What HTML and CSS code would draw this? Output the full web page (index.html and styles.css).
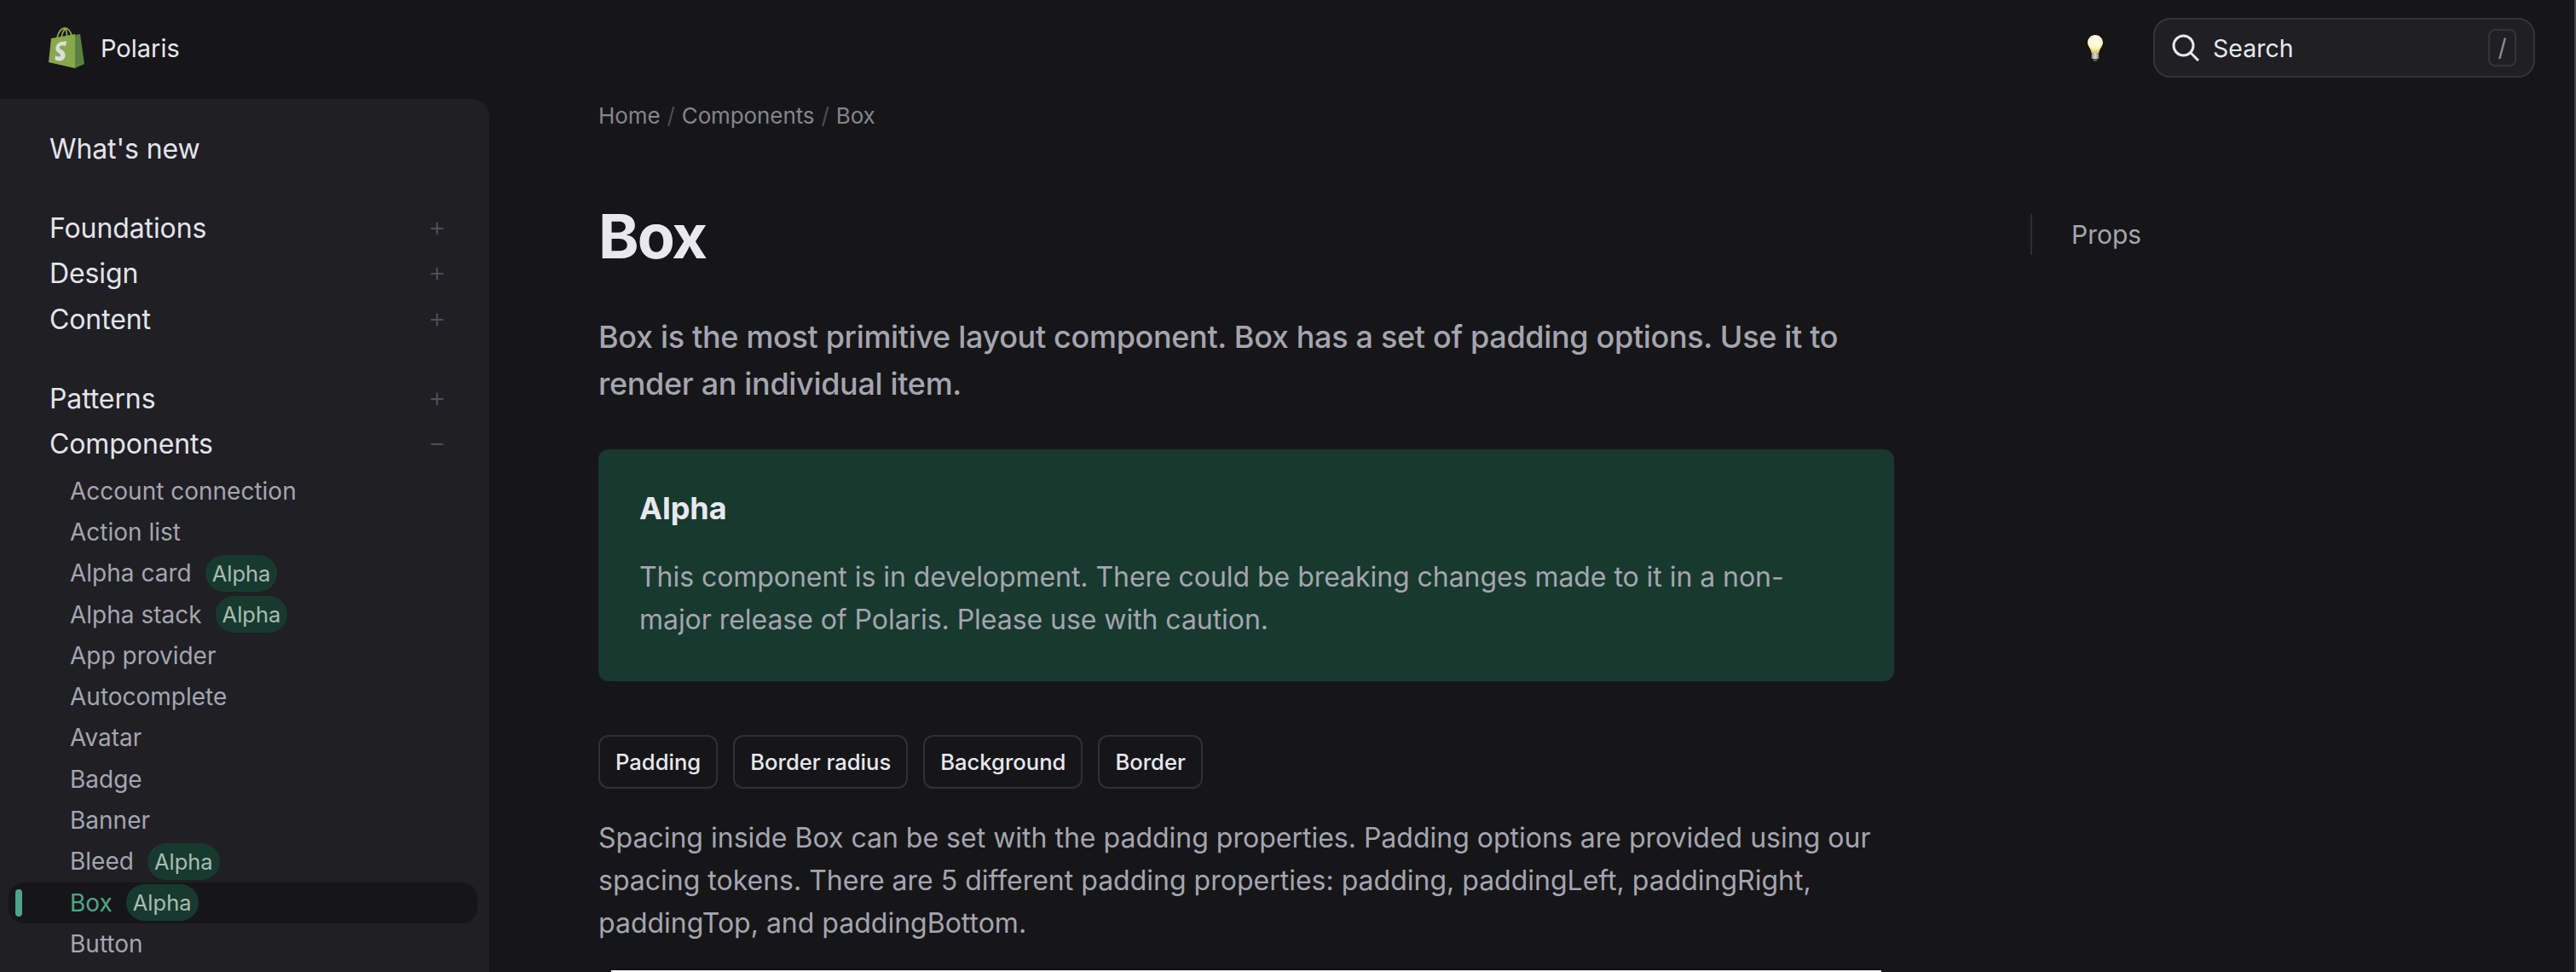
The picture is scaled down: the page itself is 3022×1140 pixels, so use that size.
FILE: index.html
```html
<!DOCTYPE html>
<html lang="en">
<head>
  <meta charset="UTF-8">
  <meta name="viewport" content="width=device-width, initial-scale=1.0">
  <title>Box - Polaris</title>
  <link rel="stylesheet" href="styles.css">
</head>
<body>
  <header class="topbar">
    <a class="brand" href="#">
      <svg class="brand-logo" viewBox="0 0 42 48" aria-hidden="true">
        <path d="M10 13C11 6 15 1 19 1C23 1 26 5 27 10M15 12C16 7 18 3 20 2C21 4 21.500 7 21.500 10" fill="none" stroke="#88a84c" stroke-width="1.800"/>
        <path fill="#88a84c" d="M3 13 31 8V48L0 41z"/>
        <path fill="#5b8142" d="M31 9 37 8 42 43 31 48z"/>
        <path fill="#dcdde0" transform="translate(-3.500 -1.500)" d="M24.800 18.200 23.200 23.800C21.500 23 19.800 22.700 18.600 22.900 16.200 23.300 16.200 24.900 16.200 25.300 16.400 27.400 22.600 28.400 23 33.700 23.300 37.800 20.700 40.600 16.800 40.900 12.800 41.100 10.800 38.900 10.800 38.900L11.800 34.400C11.800 34.400 14 36 15.800 35.900 17 35.800 17.400 34.900 17.400 34.200 17.200 31.300 12.200 31.500 11.900 26.700 11.600 22.700 14.400 18.700 20.300 18.200 22.900 18 24.800 18.200 24.800 18.200z"/>
      </svg>
      <span class="brand-name">Polaris</span>
    </a>
    <div class="topbar-right">
      <svg class="bulb" viewBox="0 0 18 31" aria-hidden="true">
        <defs>
          <radialGradient id="bulb-glow" cx="50%" cy="32%" r="62%">
            <stop offset="0%" stop-color="#fffff6"/>
            <stop offset="70%" stop-color="#fff6c8"/>
            <stop offset="100%" stop-color="#ebc768"/>
          </radialGradient>
          <linearGradient id="bulb-base" x1="0" x2="1" y1="0" y2="0">
            <stop offset="0%" stop-color="#8f8d84"/>
            <stop offset="50%" stop-color="#dedcd2"/>
            <stop offset="100%" stop-color="#7d7b73"/>
          </linearGradient>
        </defs>
        <path fill="url(#bulb-glow)" d="M9 0C4 0 0 4 0 9C0 13 3.500 15.500 4.700 21H13.300C14.500 15.500 18 13 18 9C18 4 14 0 9 0z"/>
        <rect x="4.700" y="21" width="8.600" height="7" rx="1" fill="url(#bulb-base)"/>
        <rect x="6.500" y="28" width="5" height="3" rx="1.500" fill="#55554f"/>
      </svg>
      <button class="search" type="button">
        <svg class="search-icon" viewBox="0 0 32 32" aria-hidden="true">
          <circle cx="13.500" cy="13.500" r="11.500" fill="none" stroke="currentColor" stroke-width="3"/>
          <path d="M21.800 21.800 31 31" fill="none" stroke="currentColor" stroke-width="3"/>
        </svg>
        <span class="search-label">Search</span>
        <kbd class="search-key">/</kbd>
      </button>
    </div>
  </header>

  <div class="layout">
    <nav class="sidebar">
      <ul class="nav-group">
        <li class="nav-top">What's new</li>
      </ul>
      <ul class="nav-group">
        <li class="nav-top">Foundations <span class="toggle">+</span></li>
        <li class="nav-top">Design <span class="toggle">+</span></li>
        <li class="nav-top">Content <span class="toggle">+</span></li>
      </ul>
      <ul class="nav-group">
        <li class="nav-top">Patterns <span class="toggle">+</span></li>
        <li class="nav-top">Components <span class="toggle">&minus;</span></li>
      </ul>
      <ul class="nav-sub">
        <li class="nav-item">Account connection</li>
        <li class="nav-item">Action list</li>
        <li class="nav-item">Alpha card <span class="badge">Alpha</span></li>
        <li class="nav-item">Alpha stack <span class="badge">Alpha</span></li>
        <li class="nav-item">App provider</li>
        <li class="nav-item">Autocomplete</li>
        <li class="nav-item">Avatar</li>
        <li class="nav-item">Badge</li>
        <li class="nav-item">Banner</li>
        <li class="nav-item">Bleed <span class="badge">Alpha</span></li>
        <li class="nav-item active">Box <span class="badge">Alpha</span></li>
        <li class="nav-item">Button</li>
      </ul>
    </nav>

    <main class="content">
      <div class="breadcrumbs">
        <span>Home</span><span class="crumb-sep">/</span><span>Components</span><span class="crumb-sep">/</span><span>Box</span>
      </div>
      <div class="page-columns">
        <article class="article">
          <h1>Box</h1>
          <p class="lead">Box is the most primitive layout component. Box has a set of padding options. Use it to render an individual item.</p>
          <section class="callout">
            <h2>Alpha</h2>
            <p>This component is in development. There could be breaking changes made to it in a non-major release of Polaris. Please use with caution.</p>
          </section>
          <div class="tabs">
            <button class="tab" type="button">Padding</button>
            <button class="tab" type="button">Border radius</button>
            <button class="tab" type="button">Background</button>
            <button class="tab" type="button">Border</button>
          </div>
          <p class="body-text">Spacing inside Box can be set with the padding properties. Padding options are provided using our spacing tokens. There are 5 different padding properties: padding, paddingLeft, paddingRight, paddingTop, and paddingBottom.</p>
          <div class="preview"></div>
        </article>
        <aside class="toc">
          <a href="#">Props</a>
        </aside>
      </div>
    </main>
  </div>
</body>
</html>
```

FILE: styles.css
```css
* {
  box-sizing: border-box;
}
html, body {
  height: 100%;
}
body {
  margin: 0;
  overflow: hidden;
  background-color: #161618;
  border-right: 2px solid #48484a;
  color: #e8e8ef;
  font-family: Inter, "Liberation Sans", sans-serif;
}
ul {
  list-style: none;
  margin: 0;
  padding: 0;
}
a {
  color: inherit;
  text-decoration: none;
}

/* top bar */
.topbar {
  display: flex;
  align-items: center;
  justify-content: space-between;
  height: 116px;
  padding: 0 47px 4px 57px;
}
.brand {
  display: flex;
  align-items: center;
  gap: 19px;
}
.brand-logo {
  width: 42px;
  height: 48px;
}
.brand-name {
  font-size: 29px;
}
.topbar-right {
  display: flex;
  align-items: center;
  gap: 59px;
  margin-right: -1px;
}
.bulb {
  width: 18px;
  height: 31px;
}
.search {
  display: flex;
  align-items: center;
  width: 448px;
  height: 70px;
  padding: 0 20px;
  background-color: #1f1f24;
  border: 2px solid #34343a;
  border-radius: 20px;
  color: #e8e8ef;
  font-family: inherit;
}
.search-icon {
  width: 32px;
  height: 32px;
  margin-right: 16px;
}
.search-label {
  flex: 1;
  text-align: left;
  font-size: 28.500px;
}
.search-key {
  display: flex;
  align-items: center;
  justify-content: center;
  width: 33px;
  height: 44px;
  border: 2px solid #34343a;
  border-radius: 8px;
  color: #8f8f97;
  font-family: inherit;
  font-size: 28px;
}

/* sidebar */
.layout {
  display: flex;
  height: calc(100% - 116px);
}
.sidebar {
  flex: 0 0 574px;
  padding: 32px 14px 0 10px;
  overflow: hidden;
  background-color: #1f1f24;
  border-top-right-radius: 20px;
}
.nav-group {
  margin-bottom: 39.700px;
}
.nav-group:nth-child(3) {
  margin-bottom: 0;
}
.nav-top {
  display: flex;
  align-items: center;
  justify-content: space-between;
  height: 53.300px;
  padding: 0 37px 0 48px;
  color: #e4e4eb;
  font-size: 32px;
  letter-spacing: -0.100px;
}
.toggle {
  margin-bottom: 4px;
  color: #505057;
  font-size: 32px;
  font-weight: 300;
}
.nav-sub {
  margin-top: 4.400px;
}
.nav-item {
  display: flex;
  align-items: center;
  gap: 16px;
  height: 48.300px;
  padding-left: 72px;
  color: #a5a5b0;
  font-size: 28px;
}
.nav-item.active {
  position: relative;
  background-color: #161618;
  border-radius: 18px;
  color: #4fa585;
}
.nav-item.active::before {
  content: "";
  position: absolute;
  left: 8px;
  top: 8px;
  bottom: 8px;
  width: 8px;
  border-radius: 4px;
  background-color: #4fa585;
}
.badge {
  display: inline-flex;
  align-items: center;
  height: 43px;
  padding: 0 8px;
  border-radius: 22px;
  background-color: #183a2e;
  color: #a8bcb3;
  font-size: 25.500px;
}

/* main */
.content {
  flex: 1;
  padding: 0 0 0 128px;
  overflow: hidden;
}
.breadcrumbs {
  display: flex;
  align-items: center;
  gap: 8px;
  margin-top: 4px;
  color: #85858e;
  font-size: 26px;
  letter-spacing: -0.100px;
}
.crumb-sep {
  color: #4e4e55;
}
.page-columns {
  display: flex;
  gap: 160px;
}
.article {
  flex: 0 0 1520px;
}
h1 {
  margin: 82px 0 0;
  font-size: 72px;
  line-height: 88px;
  font-weight: 750;
  letter-spacing: -2px;
}
.lead {
  margin: 47px 0 0;
  color: #a5a5b0;
  font-size: 36px;
  font-weight: 500;
  line-height: 55px;
  letter-spacing: -0.330px;
}
.callout {
  margin-top: 49px;
  padding: 47px 48px 47px;
  background-color: #18392e;
  border-radius: 12px;
}
.callout h2 {
  margin: 0;
  font-size: 36px;
  line-height: 44px;
  font-weight: 700;
}
.callout p {
  margin: 34px 0 0;
  color: #a5a5b0;
  font-size: 32px;
  line-height: 50px;
  letter-spacing: -0.050px;
}
.tabs {
  display: flex;
  gap: 18px;
  margin-top: 63px;
}
.tab {
  height: 63px;
  padding: 0 18px;
  background: transparent;
  border: 2px solid #303036;
  border-radius: 12px;
  color: #e8e8ef;
  font-family: inherit;
  font-size: 25.600px;
  font-weight: 500;
}
.body-text {
  margin: 33px 0 0;
  color: #a5a5b0;
  font-size: 32px;
  line-height: 50px;
}
.preview {
  height: 40px;
  margin: 30px 15px 0;
  background-color: #fff;
}
.toc {
  margin-top: 100px;
}
.toc a {
  display: block;
  height: 48px;
  padding-left: 46px;
  border-left: 2px solid #2e2e33;
  color: #a5a5b0;
  font-size: 30px;
  line-height: 48px;
}
```
